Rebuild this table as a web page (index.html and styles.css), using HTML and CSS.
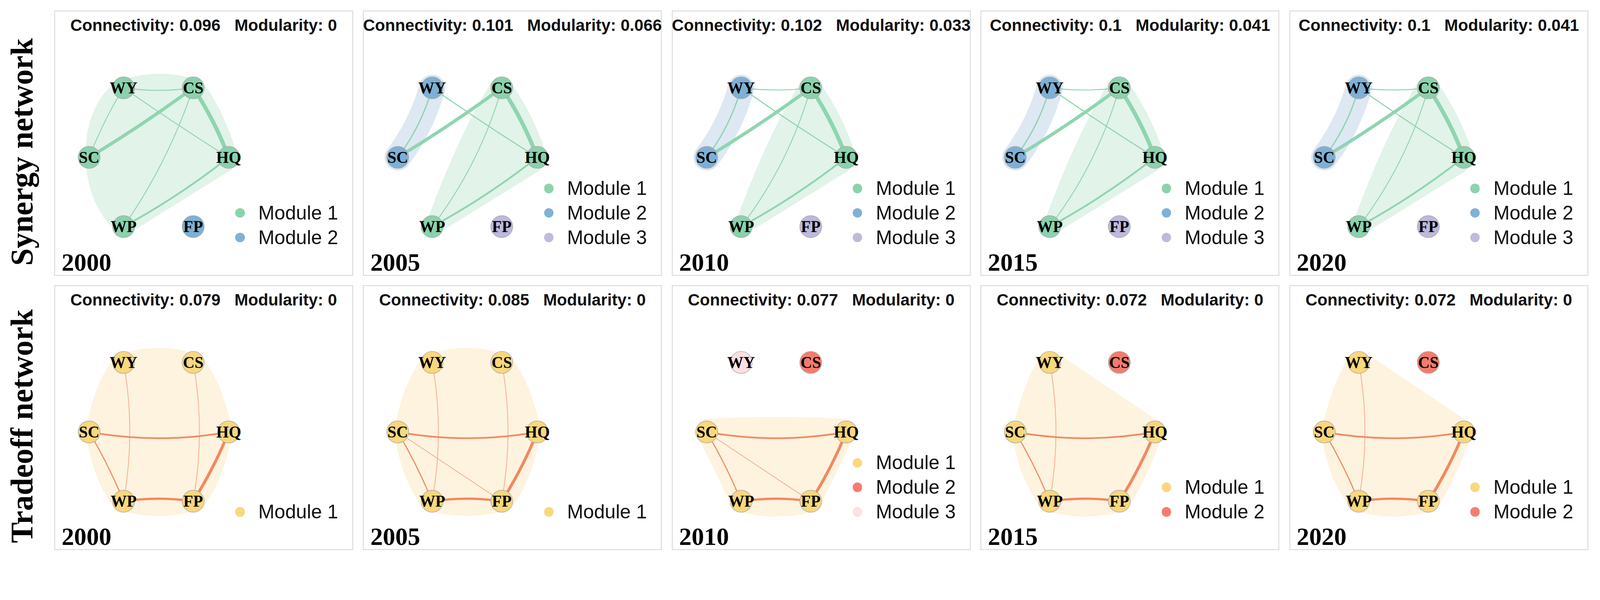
FILE: index.html
```html
<!DOCTYPE html>
<html lang="en">
<head>
<meta charset="utf-8">
<title>Synergy and tradeoff networks</title>
<link rel="stylesheet" href="styles.css">
</head>
<body>
<div class="fig">

  <div class="rowlabel"><span>Synergy network</span></div>

  <section class="panel">
    <div class="hdr"><span>Connectivity: 0.096</span><span>Modularity: 0</span></div>
    <div class="body">
      <div class="plot">
        <svg viewBox="3 64 480 590">
          <path class="hull-g" d="M165,200 Q280,150 405,195 Q460,270 492,370 Q500,425 482,437 L225,597 Q190,620 165,597 C70,520 50,290 165,200 Z"/>
          <path class="es" stroke-width="2.5" d="M190,212 Q285,226 380,212"/>
          <path class="es" stroke-width="2.5" d="M190,212 Q134,303 96,402"/>
          <path class="es" stroke-width="9" d="M96,402 Q242,314 380,212"/>
          <path class="es" stroke-width="11" d="M380,212 Q439,301 477,402"/>
          <path class="es" stroke-width="2.5" d="M190,212 Q331,311 477,402"/>
          <path class="es" stroke-width="2.5" d="M380,212 Q312,415 190,591"/>
          <path class="es" stroke-width="5" d="M477,402 Q341,509 190,591"/>
          <circle class="nd g" cx="190" cy="212" r="30"/><text class="lbl" x="190" y="227">WY</text>
          <circle class="nd g" cx="380" cy="212" r="30"/><text class="lbl" x="380" y="227">CS</text>
          <circle class="nd g" cx="96" cy="402" r="30"/><text class="lbl" x="96" y="417">SC</text>
          <circle class="nd g" cx="477" cy="402" r="30"/><text class="lbl" x="477" y="417">HQ</text>
          <circle class="nd g" cx="190" cy="591" r="30"/><text class="lbl" x="190" y="606">WP</text>
          <circle class="nd b" cx="380" cy="591" r="30"/><text class="lbl" x="380" y="606">FP</text>
        </svg>
        <div class="year">2000</div>
      </div>
      <div class="legend">
        <div class="li"><span class="dot dg"></span>Module 1</div>
        <div class="li"><span class="dot db"></span>Module 2</div>
      </div>
    </div>
  </section>

  <section class="panel">
    <div class="hdr"><span>Connectivity: 0.101</span><span>Modularity: 0.066</span></div>
    <div class="body">
      <div class="plot">
        <svg viewBox="3 64 480 590">
          <path class="hull-b" d="M190,212 Q161,316 96,402"/>
          <path class="hull-g" d="M350,200 C362,182 398,180 410,205 Q462,282 492,365 C502,398 498,428 480,440 L226,597 C205,610 176,592 180,565 Q265,335 350,200 Z"/>
          <path class="es" stroke-width="3.5" d="M190,212 Q161,316 96,402"/>
          <path class="es" stroke-width="9" d="M96,402 Q242,314 380,212"/>
          <path class="es" stroke-width="11" d="M380,212 Q439,301 477,402"/>
          <path class="es" stroke-width="3" d="M190,212 Q331,311 477,402"/>
          <path class="es" stroke-width="2.5" d="M380,212 Q321,419 190,591"/>
          <path class="es" stroke-width="5" d="M477,402 Q341,509 190,591"/>
          <circle class="nd b" cx="190" cy="212" r="30"/><text class="lbl" x="190" y="227">WY</text>
          <circle class="nd g" cx="380" cy="212" r="30"/><text class="lbl" x="380" y="227">CS</text>
          <circle class="nd b" cx="96" cy="402" r="30"/><text class="lbl" x="96" y="417">SC</text>
          <circle class="nd g" cx="477" cy="402" r="30"/><text class="lbl" x="477" y="417">HQ</text>
          <circle class="nd g" cx="190" cy="591" r="30"/><text class="lbl" x="190" y="606">WP</text>
          <circle class="nd p" cx="380" cy="591" r="30"/><text class="lbl" x="380" y="606">FP</text>
        </svg>
        <div class="year">2005</div>
      </div>
      <div class="legend">
        <div class="li"><span class="dot dg"></span>Module 1</div>
        <div class="li"><span class="dot db"></span>Module 2</div>
        <div class="li"><span class="dot dp"></span>Module 3</div>
      </div>
    </div>
  </section>

  <section class="panel">
    <div class="hdr"><span>Connectivity: 0.102</span><span>Modularity: 0.033</span></div>
    <div class="body">
      <div class="plot">
        <svg viewBox="3 64 480 590">
          <path class="hull-b" d="M190,212 Q161,316 96,402"/>
          <path class="hull-g" d="M350,200 C362,182 398,180 410,205 Q462,282 492,365 C502,398 498,428 480,440 L226,597 C205,610 176,592 180,565 Q265,335 350,200 Z"/>
          <path class="es" stroke-width="2.5" d="M190,212 Q285,224 380,212"/>
          <path class="es" stroke-width="3.5" d="M190,212 Q161,316 96,402"/>
          <path class="es" stroke-width="9" d="M96,402 Q242,314 380,212"/>
          <path class="es" stroke-width="11" d="M380,212 Q439,301 477,402"/>
          <path class="es" stroke-width="3" d="M190,212 Q331,311 477,402"/>
          <path class="es" stroke-width="2.5" d="M380,212 Q321,419 190,591"/>
          <path class="es" stroke-width="5" d="M477,402 Q341,509 190,591"/>
          <circle class="nd b" cx="190" cy="212" r="30"/><text class="lbl" x="190" y="227">WY</text>
          <circle class="nd g" cx="380" cy="212" r="30"/><text class="lbl" x="380" y="227">CS</text>
          <circle class="nd b" cx="96" cy="402" r="30"/><text class="lbl" x="96" y="417">SC</text>
          <circle class="nd g" cx="477" cy="402" r="30"/><text class="lbl" x="477" y="417">HQ</text>
          <circle class="nd g" cx="190" cy="591" r="30"/><text class="lbl" x="190" y="606">WP</text>
          <circle class="nd p" cx="380" cy="591" r="30"/><text class="lbl" x="380" y="606">FP</text>
        </svg>
        <div class="year">2010</div>
      </div>
      <div class="legend">
        <div class="li"><span class="dot dg"></span>Module 1</div>
        <div class="li"><span class="dot db"></span>Module 2</div>
        <div class="li"><span class="dot dp"></span>Module 3</div>
      </div>
    </div>
  </section>

  <section class="panel">
    <div class="hdr"><span>Connectivity: 0.1</span><span>Modularity: 0.041</span></div>
    <div class="body">
      <div class="plot">
        <svg viewBox="3 64 480 590">
          <path class="hull-b" d="M190,212 Q161,316 96,402"/>
          <path class="hull-g" d="M350,200 C362,182 398,180 410,205 Q462,282 492,365 C502,398 498,428 480,440 L226,597 C205,610 176,592 180,565 Q265,335 350,200 Z"/>
          <path class="es" stroke-width="2.5" d="M190,212 Q285,224 380,212"/>
          <path class="es" stroke-width="3.5" d="M190,212 Q161,316 96,402"/>
          <path class="es" stroke-width="9" d="M96,402 Q242,314 380,212"/>
          <path class="es" stroke-width="11" d="M380,212 Q439,301 477,402"/>
          <path class="es" stroke-width="3" d="M190,212 Q331,311 477,402"/>
          <path class="es" stroke-width="2.5" d="M380,212 Q321,419 190,591"/>
          <path class="es" stroke-width="5" d="M477,402 Q341,509 190,591"/>
          <circle class="nd b" cx="190" cy="212" r="30"/><text class="lbl" x="190" y="227">WY</text>
          <circle class="nd g" cx="380" cy="212" r="30"/><text class="lbl" x="380" y="227">CS</text>
          <circle class="nd b" cx="96" cy="402" r="30"/><text class="lbl" x="96" y="417">SC</text>
          <circle class="nd g" cx="477" cy="402" r="30"/><text class="lbl" x="477" y="417">HQ</text>
          <circle class="nd g" cx="190" cy="591" r="30"/><text class="lbl" x="190" y="606">WP</text>
          <circle class="nd p" cx="380" cy="591" r="30"/><text class="lbl" x="380" y="606">FP</text>
        </svg>
        <div class="year">2015</div>
      </div>
      <div class="legend">
        <div class="li"><span class="dot dg"></span>Module 1</div>
        <div class="li"><span class="dot db"></span>Module 2</div>
        <div class="li"><span class="dot dp"></span>Module 3</div>
      </div>
    </div>
  </section>

  <section class="panel">
    <div class="hdr"><span>Connectivity: 0.1</span><span>Modularity: 0.041</span></div>
    <div class="body">
      <div class="plot">
        <svg viewBox="3 64 480 590">
          <path class="hull-b" d="M190,212 Q161,316 96,402"/>
          <path class="hull-g" d="M350,200 C362,182 398,180 410,205 Q462,282 492,365 C502,398 498,428 480,440 L226,597 C205,610 176,592 180,565 Q265,335 350,200 Z"/>
          <path class="es" stroke-width="2.5" d="M190,212 Q285,224 380,212"/>
          <path class="es" stroke-width="3.5" d="M190,212 Q161,316 96,402"/>
          <path class="es" stroke-width="9" d="M96,402 Q242,314 380,212"/>
          <path class="es" stroke-width="11" d="M380,212 Q439,301 477,402"/>
          <path class="es" stroke-width="3" d="M190,212 Q331,311 477,402"/>
          <path class="es" stroke-width="2.5" d="M380,212 Q321,419 190,591"/>
          <path class="es" stroke-width="5" d="M477,402 Q341,509 190,591"/>
          <circle class="nd b" cx="190" cy="212" r="30"/><text class="lbl" x="190" y="227">WY</text>
          <circle class="nd g" cx="380" cy="212" r="30"/><text class="lbl" x="380" y="227">CS</text>
          <circle class="nd b" cx="96" cy="402" r="30"/><text class="lbl" x="96" y="417">SC</text>
          <circle class="nd g" cx="477" cy="402" r="30"/><text class="lbl" x="477" y="417">HQ</text>
          <circle class="nd g" cx="190" cy="591" r="30"/><text class="lbl" x="190" y="606">WP</text>
          <circle class="nd p" cx="380" cy="591" r="30"/><text class="lbl" x="380" y="606">FP</text>
        </svg>
        <div class="year">2020</div>
      </div>
      <div class="legend">
        <div class="li"><span class="dot dg"></span>Module 1</div>
        <div class="li"><span class="dot db"></span>Module 2</div>
        <div class="li"><span class="dot dp"></span>Module 3</div>
      </div>
    </div>
  </section>

  <div class="rowlabel"><span>Tradeoff network</span></div>

  <section class="panel">
    <div class="hdr"><span>Connectivity: 0.079</span><span>Modularity: 0</span></div>
    <div class="body">
      <div class="plot">
        <svg viewBox="3 64 480 590">
          <path class="hull-y" d="M165,195 Q285,150 405,195 Q470,290 485,402 Q470,520 405,612 Q285,650 165,612 Q100,520 88,402 Q100,290 165,195 Z"/>
          <path class="et thin" stroke-width="2" d="M190,212 Q224,401 190,591"/>
          <path class="et thin" stroke-width="2" d="M380,212 Q414,401 380,591"/>
          <path class="et" stroke-width="4.5" d="M96,402 Q286,436 477,402"/>
          <path class="et" stroke-width="3" d="M96,402 Q150,493 190,591"/>
          <path class="et" stroke-width="8" d="M477,402 Q437,501 380,591"/>
          <path class="et" stroke-width="6" d="M190,591 Q285,577 380,591"/>
          <circle class="nd y" cx="190" cy="212" r="30"/><text class="lbl" x="190" y="227">WY</text>
          <circle class="nd y" cx="380" cy="212" r="30"/><text class="lbl" x="380" y="227">CS</text>
          <circle class="nd y" cx="96" cy="402" r="30"/><text class="lbl" x="96" y="417">SC</text>
          <circle class="nd y" cx="477" cy="402" r="30"/><text class="lbl" x="477" y="417">HQ</text>
          <circle class="nd y" cx="190" cy="591" r="30"/><text class="lbl" x="190" y="606">WP</text>
          <circle class="nd y" cx="380" cy="591" r="30"/><text class="lbl" x="380" y="606">FP</text>
        </svg>
        <div class="year">2000</div>
      </div>
      <div class="legend">
        <div class="li"><span class="dot dy"></span>Module 1</div>
      </div>
    </div>
  </section>

  <section class="panel">
    <div class="hdr"><span>Connectivity: 0.085</span><span>Modularity: 0</span></div>
    <div class="body">
      <div class="plot">
        <svg viewBox="3 64 480 590">
          <path class="hull-y" d="M165,195 Q285,150 405,195 Q470,290 485,402 Q470,520 405,612 Q285,650 165,612 Q100,520 88,402 Q100,290 165,195 Z"/>
          <path class="et thin" stroke-width="2" d="M190,212 Q224,401 190,591"/>
          <path class="et thin" stroke-width="2" d="M380,212 Q414,401 380,591"/>
          <path class="et thin" stroke-width="2" d="M96,402 L380,591"/>
          <path class="et" stroke-width="4.5" d="M96,402 Q286,436 477,402"/>
          <path class="et" stroke-width="3" d="M96,402 Q150,493 190,591"/>
          <path class="et" stroke-width="8" d="M477,402 Q437,501 380,591"/>
          <path class="et" stroke-width="6" d="M190,591 Q285,577 380,591"/>
          <circle class="nd y" cx="190" cy="212" r="30"/><text class="lbl" x="190" y="227">WY</text>
          <circle class="nd y" cx="380" cy="212" r="30"/><text class="lbl" x="380" y="227">CS</text>
          <circle class="nd y" cx="96" cy="402" r="30"/><text class="lbl" x="96" y="417">SC</text>
          <circle class="nd y" cx="477" cy="402" r="30"/><text class="lbl" x="477" y="417">HQ</text>
          <circle class="nd y" cx="190" cy="591" r="30"/><text class="lbl" x="190" y="606">WP</text>
          <circle class="nd y" cx="380" cy="591" r="30"/><text class="lbl" x="380" y="606">FP</text>
        </svg>
        <div class="year">2005</div>
      </div>
      <div class="legend">
        <div class="li"><span class="dot dy"></span>Module 1</div>
      </div>
    </div>
  </section>

  <section class="panel">
    <div class="hdr"><span>Connectivity: 0.077</span><span>Modularity: 0</span></div>
    <div class="body">
      <div class="plot">
        <svg viewBox="3 64 480 590">
          <path class="hull-y" d="M96,366 Q285,356 477,366 Q505,378 490,430 L400,615 Q290,650 170,615 L80,430 Q70,372 96,366 Z"/>
          <path class="et thin" stroke-width="2" d="M96,402 L380,591"/>
          <path class="et" stroke-width="4.5" d="M96,402 Q286,436 477,402"/>
          <path class="et" stroke-width="3" d="M96,402 Q150,493 190,591"/>
          <path class="et" stroke-width="8" d="M477,402 Q437,501 380,591"/>
          <path class="et" stroke-width="6" d="M190,591 Q285,577 380,591"/>
          <circle class="nd k" cx="190" cy="212" r="30"/><text class="lbl" x="190" y="227">WY</text>
          <circle class="nd r" cx="380" cy="212" r="30"/><text class="lbl" x="380" y="227">CS</text>
          <circle class="nd y" cx="96" cy="402" r="30"/><text class="lbl" x="96" y="417">SC</text>
          <circle class="nd y" cx="477" cy="402" r="30"/><text class="lbl" x="477" y="417">HQ</text>
          <circle class="nd y" cx="190" cy="591" r="30"/><text class="lbl" x="190" y="606">WP</text>
          <circle class="nd y" cx="380" cy="591" r="30"/><text class="lbl" x="380" y="606">FP</text>
        </svg>
        <div class="year">2010</div>
      </div>
      <div class="legend">
        <div class="li"><span class="dot dy"></span>Module 1</div>
        <div class="li"><span class="dot dr"></span>Module 2</div>
        <div class="li"><span class="dot dk"></span>Module 3</div>
      </div>
    </div>
  </section>

  <section class="panel">
    <div class="hdr"><span>Connectivity: 0.072</span><span>Modularity: 0</span></div>
    <div class="body">
      <div class="plot">
        <svg viewBox="3 64 480 590">
          <path class="hull-y" d="M160,200 Q190,170 230,200 L480,368 Q500,385 490,430 Q450,540 400,615 Q285,650 170,615 Q100,520 88,402 Q110,290 160,200 Z"/>
          <path class="et thin" stroke-width="2" d="M190,212 Q224,401 190,591"/>
          <path class="et" stroke-width="4.5" d="M96,402 Q286,436 477,402"/>
          <path class="et" stroke-width="3" d="M96,402 Q150,493 190,591"/>
          <path class="et" stroke-width="8" d="M477,402 Q437,501 380,591"/>
          <path class="et" stroke-width="6" d="M190,591 Q285,577 380,591"/>
          <circle class="nd y" cx="190" cy="212" r="30"/><text class="lbl" x="190" y="227">WY</text>
          <circle class="nd r" cx="380" cy="212" r="30"/><text class="lbl" x="380" y="227">CS</text>
          <circle class="nd y" cx="96" cy="402" r="30"/><text class="lbl" x="96" y="417">SC</text>
          <circle class="nd y" cx="477" cy="402" r="30"/><text class="lbl" x="477" y="417">HQ</text>
          <circle class="nd y" cx="190" cy="591" r="30"/><text class="lbl" x="190" y="606">WP</text>
          <circle class="nd y" cx="380" cy="591" r="30"/><text class="lbl" x="380" y="606">FP</text>
        </svg>
        <div class="year">2015</div>
      </div>
      <div class="legend">
        <div class="li"><span class="dot dy"></span>Module 1</div>
        <div class="li"><span class="dot dr"></span>Module 2</div>
      </div>
    </div>
  </section>

  <section class="panel">
    <div class="hdr"><span>Connectivity: 0.072</span><span>Modularity: 0</span></div>
    <div class="body">
      <div class="plot">
        <svg viewBox="3 64 480 590">
          <path class="hull-y" d="M160,200 Q190,170 230,200 L480,368 Q500,385 490,430 Q450,540 400,615 Q285,650 170,615 Q100,520 88,402 Q110,290 160,200 Z"/>
          <path class="et thin" stroke-width="2" d="M190,212 Q224,401 190,591"/>
          <path class="et" stroke-width="4.5" d="M96,402 Q286,436 477,402"/>
          <path class="et" stroke-width="3" d="M96,402 Q150,493 190,591"/>
          <path class="et" stroke-width="8" d="M477,402 Q437,501 380,591"/>
          <path class="et" stroke-width="6" d="M190,591 Q285,577 380,591"/>
          <circle class="nd y" cx="190" cy="212" r="30"/><text class="lbl" x="190" y="227">WY</text>
          <circle class="nd r" cx="380" cy="212" r="30"/><text class="lbl" x="380" y="227">CS</text>
          <circle class="nd y" cx="96" cy="402" r="30"/><text class="lbl" x="96" y="417">SC</text>
          <circle class="nd y" cx="477" cy="402" r="30"/><text class="lbl" x="477" y="417">HQ</text>
          <circle class="nd y" cx="190" cy="591" r="30"/><text class="lbl" x="190" y="606">WP</text>
          <circle class="nd y" cx="380" cy="591" r="30"/><text class="lbl" x="380" y="606">FP</text>
        </svg>
        <div class="year">2020</div>
      </div>
      <div class="legend">
        <div class="li"><span class="dot dy"></span>Module 1</div>
        <div class="li"><span class="dot dr"></span>Module 2</div>
      </div>
    </div>
  </section>

</div>
</body>
</html>
```

FILE: styles.css
```css
/* --u is one pixel of the 4368-px-wide figure, derived from the viewport */
:root {
  --u: calc(100vw / 4368);
}

html, body {
  margin: 0;
  padding: 0;
  background: #ffffff;
  overflow: hidden;
}

.fig {
  display: grid;
  grid-template-columns: calc(121 * var(--u)) repeat(5, calc(816 * var(--u)));
  grid-auto-rows: calc(724 * var(--u));
  column-gap: calc(27 * var(--u));
  row-gap: calc(25 * var(--u));
  padding-top: calc(29 * var(--u));
  color: #000;
}

.rowlabel {
  display: flex;
  align-items: center;
  padding-left: calc(18 * var(--u));
  padding-top: calc(48 * var(--u));
}

.rowlabel span {
  writing-mode: vertical-rl;
  transform: rotate(180deg);
  font-family: "Liberation Serif", "Times New Roman", serif;
  font-weight: bold;
  font-size: calc(85 * var(--u));
  line-height: calc(85 * var(--u));
  white-space: nowrap;
}

.panel {
  box-sizing: border-box;
  border: calc(3 * var(--u)) solid #d6d6d6;
  display: flex;
  flex-direction: column;
  background: #fff;
}

.hdr {
  display: flex;
  justify-content: center;
  gap: calc(38 * var(--u));
  padding-top: calc(16 * var(--u));
  font-family: "Liberation Sans", Arial, sans-serif;
  font-weight: bold;
  font-size: calc(45 * var(--u));
  line-height: calc(45 * var(--u));
  white-space: nowrap;
  color: #111;
}

.body {
  flex: 1;
  display: flex;
  min-height: 0;
}

.plot {
  width: calc(480 * var(--u));
  flex: none;
  display: flex;
  flex-direction: column;
}

.plot svg {
  display: block;
  width: calc(480 * var(--u));
  height: calc(590 * var(--u));
  overflow: visible;
}

.year {
  padding-left: calc(18 * var(--u));
  font-family: "Liberation Serif", "Times New Roman", serif;
  font-weight: bold;
  font-size: calc(68 * var(--u));
  line-height: calc(68 * var(--u));
}

.legend {
  flex: 1;
  display: flex;
  flex-direction: column;
  justify-content: flex-end;
  padding-bottom: calc(69 * var(--u));
}

.li {
  display: flex;
  align-items: center;
  height: calc(67 * var(--u));
  font-family: "Liberation Sans", Arial, sans-serif;
  font-size: calc(53 * var(--u));
  line-height: calc(67 * var(--u));
  color: #111;
  white-space: nowrap;
}

.dot {
  width: calc(26 * var(--u));
  height: calc(26 * var(--u));
  border-radius: 50%;
  margin-left: calc(12 * var(--u));
  margin-right: calc(37 * var(--u));
  flex: none;
}

.dg { background: #8cd3ad; }
.db { background: #80b1d6; }
.dp { background: #bfbadc; }
.dy { background: #fad87e; }
.dr { background: #f57d70; }
.dk { background: #fde0e2; }

/* network drawing (SVG user units = figure pixels) */
.hull-g { fill: #e2f3e9; stroke: none; }
.hull-b { fill: none; stroke: #dde8f3; stroke-width: 72; stroke-linecap: round; }
.hull-y { fill: #fdf3df; stroke: none; }

.es { fill: none; stroke: #8fd5b0; stroke-linecap: round; }
.et { fill: none; stroke: #f38860; stroke-linecap: round; }
.et.thin { stroke: #f6a98b; }

.nd { stroke: #a9a9a9; stroke-width: 1.5; }
.nd.g { fill: #8ad2ac; }
.nd.b { fill: #7eb0d5; }
.nd.p { fill: #bdb8dc; }
.nd.y { fill: #f9d77d; }
.nd.r { fill: #f47c6e; }
.nd.k { fill: #fde0e2; }

.lbl {
  font-family: "Liberation Serif", "Times New Roman", serif;
  font-weight: bold;
  font-size: 44px;
  text-anchor: middle;
  fill: #000;
}
```
